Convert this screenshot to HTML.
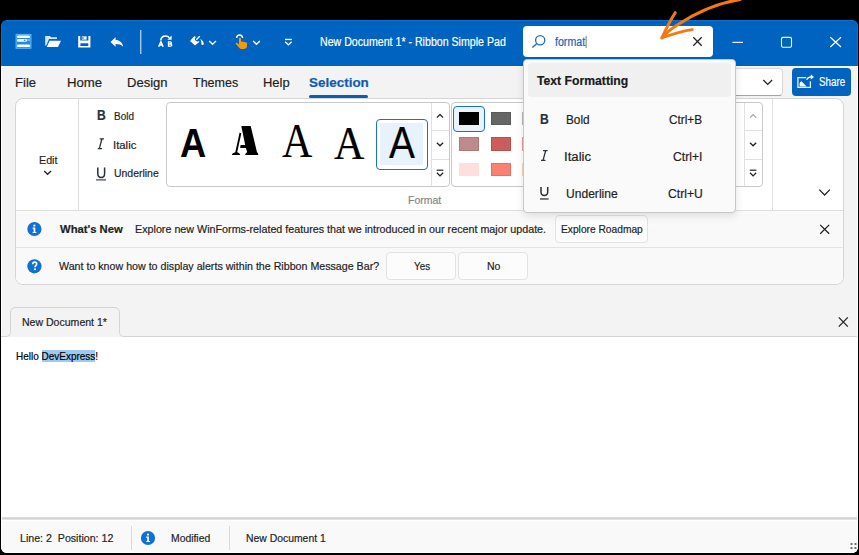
<!DOCTYPE html>
<html><head><meta charset="utf-8">
<style>
html,body{margin:0;padding:0;}
body{width:859px;height:555px;overflow:hidden;background:#000;position:relative;font-family:"Liberation Sans",sans-serif;}
.a{position:absolute;box-sizing:border-box;}
.tx{position:absolute;-webkit-text-stroke:0.2px currentColor;white-space:pre;line-height:1;font-family:"Liberation Sans",sans-serif;transform-origin:0 0;}
svg{position:absolute;overflow:visible;}
</style></head><body>
<!-- window -->
<div class="a" style="left:1px;top:20px;width:857px;height:46px;background:#0063c0;border:1px solid #1270cc;border-bottom:none;border-radius:6px 6px 0 0;"></div>
<div class="a" style="left:1px;top:66px;width:857px;height:487px;background:#f3f3f3;border:1px solid #fdfdfd;border-top:none;border-radius:0 0 6px 6px;"></div>
<!-- search box -->
<div class="a" style="left:523px;top:26px;width:190px;height:31px;background:#fff;border-radius:4px;"></div>
<!-- combobox -->
<div class="a" style="left:700px;top:68px;width:83px;height:28px;background:#fff;border:1px solid #d9d9d9;border-bottom-color:#a3a3a3;border-radius:4px;"></div>
<!-- share -->
<div class="a" style="left:792px;top:68px;width:59px;height:28px;background:#0063c0;border-radius:4px;"></div>
<!-- tab underline -->
<div class="a" style="left:309px;top:95px;width:59px;height:3px;background:#0f5cb5;border-radius:2px;"></div>
<!-- ribbon panel -->
<div class="a" style="left:15px;top:98px;width:829px;height:187px;background:#fff;border:1px solid #d5d5d5;border-radius:8px;overflow:hidden;">
  <div class="a" style="left:62px;top:0;width:1px;height:112px;background:#dedede;"></div>
  <div class="a" style="left:756px;top:0;width:1px;height:112px;background:#dedede;"></div>
  <div class="a" style="left:0;top:111px;width:829px;height:1px;background:#dedede;"></div>
  <div class="a" style="left:0;top:112px;width:829px;height:74px;background:#f9f9f9;"></div>
  <div class="a" style="left:0;top:148px;width:829px;height:1px;background:#e3e3e3;"></div>
</div>
<!-- style gallery -->
<div class="a" style="left:166px;top:102px;width:284px;height:85px;border:1px solid #c9c9c9;border-radius:4px;background:#fff;">
  <div class="a" style="left:264px;top:0;width:1px;height:83px;background:#e0e0e0;"></div>
  <div class="a" style="left:264px;top:27px;width:18px;height:1px;background:#e0e0e0;"></div>
  <div class="a" style="left:264px;top:56px;width:18px;height:1px;background:#e0e0e0;"></div>
</div>
<!-- selected style -->
<div class="a" style="left:376px;top:119px;width:52px;height:51px;border:1.5px solid #1a6fcf;border-radius:4px;background:#fff;">
  <div class="a" style="left:3px;top:3px;width:43px;height:42px;background:#e8f2fc;"></div>
</div>
<!-- color gallery -->
<div class="a" style="left:451px;top:102px;width:312px;height:85px;border:1px solid #c9c9c9;border-radius:4px;background:#fff;">
  <div class="a" style="left:292px;top:0;width:1px;height:83px;background:#e0e0e0;"></div>
  <div class="a" style="left:292px;top:27px;width:18px;height:1px;background:#e0e0e0;"></div>
  <div class="a" style="left:292px;top:56px;width:18px;height:1px;background:#e0e0e0;"></div>
</div>
<div class="a" style="left:453px;top:106px;width:32px;height:26px;border:1.5px solid #1a6fcf;border-radius:4px;background:#eaf3fc;"></div>
<div class="a" style="left:459px;top:112px;width:20px;height:13px;background:#000;"></div>
<div class="a" style="left:491px;top:112px;width:20px;height:13px;background:#666;box-shadow:inset 0 0 0 1px rgba(0,0,0,0.1);"></div>
<div class="a" style="left:459px;top:137px;width:20px;height:14px;background:#c08a8a;box-shadow:inset 0 0 0 1px rgba(0,0,0,0.1);"></div>
<div class="a" style="left:491px;top:137px;width:20px;height:14px;background:#cd5c5c;box-shadow:inset 0 0 0 1px rgba(0,0,0,0.1);"></div>
<div class="a" style="left:459px;top:163px;width:20px;height:13px;background:#ffdfdc;"></div>
<div class="a" style="left:491px;top:163px;width:20px;height:13px;background:#fa8072;box-shadow:inset 0 0 0 1px rgba(0,0,0,0.1);"></div>
<div class="a" style="left:522px;top:112px;width:1px;height:13px;background:#b8b8b8;"></div><div class="a" style="left:522px;top:137px;width:1px;height:14px;background:#dba0a0;"></div><div class="a" style="left:522px;top:163px;width:1px;height:13px;background:#f0d4c0;"></div>
<!-- message bar buttons -->
<div class="a" style="left:555px;top:215px;width:93px;height:28px;background:#fcfcfc;border:1px solid #e2e2e2;border-radius:4px;"></div>
<div class="a" style="left:386px;top:252px;width:70px;height:28px;background:#fcfcfc;border:1px solid #e2e2e2;border-radius:4px;"></div>
<div class="a" style="left:458px;top:252px;width:70px;height:28px;background:#fcfcfc;border:1px solid #e2e2e2;border-radius:4px;"></div>
<!-- doc tab + editor -->
<div class="a" style="left:1px;top:337px;width:857px;height:180px;background:#fff;"></div>
<svg style="left:0;top:0" width="859" height="555" viewBox="0 0 859 555">
  <path d="M10.5 337 V313 Q10.5 307.5 16 307.5 H114 Q119.5 307.5 119.5 313 V337 Z" fill="#f3f3f3"/>
  <path d="M1 336.5 H6.5 Q10.5 336.5 10.5 332.5 V313 Q10.5 307.5 16 307.5 H114 Q119.5 307.5 119.5 313 V332.5 Q119.5 336.5 123.5 336.5 H857" stroke="#d4d4d4" stroke-width="1" fill="none"/>
</svg>
<div class="a" style="left:42px;top:350px;width:53px;height:12px;background:#9ccaf3;"></div>
<!-- status bar -->
<div class="a" style="left:2px;top:517px;width:855px;height:3px;background:linear-gradient(#dcdcdc 0 33%,#d2d2d2 33% 66%,#e4e4e4 66%);"></div><div class="a" style="left:2px;top:520px;width:855px;height:1px;background:#fefefe;z-index:1"></div>
<div class="a" style="left:1px;top:520px;width:857px;height:33px;background:#f9f9f9;border:1px solid #fff;border-top:none;border-radius:0 0 6px 6px;"></div>
<div class="a" style="left:131px;top:526px;width:1px;height:24px;background:#dadada;"></div>
<div class="a" style="left:229px;top:526px;width:1px;height:24px;background:#dadada;"></div>

<svg style="left:0;top:0" width="859" height="555" viewBox="0 0 859 555">
  <!-- app icon -->
  <rect x="15.4" y="33.8" width="16.2" height="15.2" rx="1" fill="#2289e6"/>
  <rect x="16.2" y="34.6" width="14.6" height="13.6" fill="none" stroke="#5fb2f6" stroke-width="1"/>
  <rect x="17" y="35.5" width="13" height="2.6" rx="1.2" fill="#fff"/>
  <rect x="17" y="38.9" width="10" height="2.8" rx="1.2" fill="#fff"/><rect x="27" y="39.5" width="3" height="1" fill="#bfe0fb"/>
  <circle cx="24.6" cy="40.3" r="0.9" fill="#2f86dc"/>
  <rect x="17" y="44.4" width="13" height="2.7" rx="1.2" fill="#fff"/>
  <!-- folder -->
  <path d="M45.2 35.9 H50 L51 37.3 H57 V39 H49 L46.3 45.5 H45.2 Z" fill="#d3e6fa"/>
  <path d="M49.6 40.8 H61 L58 46.9 H46.8 Z" fill="#fff"/>
  <!-- save -->
  <path d="M78.2 35.9 H80.2 V40.6 H88.4 V35.9 H90.4 V47.6 H78.2 Z M80.4 43.2 V46 H88.3 V43.2 Z" fill="#fff" fill-rule="evenodd"/>
  <rect x="81.8" y="36.4" width="4.8" height="3.2" fill="#fff"/>
  <circle cx="82.9" cy="38" r="0.9" fill="#3d86d6"/>
  <!-- undo -->
  <path d="M110.5 42 L115.6 37.2 V40.1 C119.5 40.1 122.3 42.3 123.2 46.8 C121.4 44.6 119 43.9 115.6 43.9 V46.8 Z" fill="#fff"/>
  <!-- separator -->
  <rect x="140" y="30" width="1.4" height="24" fill="#a9c6ea"/>
  <!-- AB -->
  <path d="M160.8 40.2 C161.2 37.2 163.5 36 165.5 36 C167.3 36 168.6 36.8 169.3 37.8" stroke="#fff" stroke-width="1.6" fill="none"/>
  <path d="M171.6 35.4 V39.8 H167.3 Z" fill="#fff"/>
  <path d="M158.7 46.7 L160.9 41.6 L163.1 46.7 M159.6 45 H162.2" stroke="#fff" stroke-width="1.5" fill="none"/>
  <path d="M168.5 41.9 V46.1 H170.6 Q171.8 46.1 171.8 45.1 Q171.8 44 170.4 44 H168.5 M168.5 44 H170.2 Q171.4 44 171.4 42.9 Q171.4 41.9 170.2 41.9 H167.9" stroke="#fff" stroke-width="1.3" fill="none"/>
  <!-- paint bucket -->
  <path d="M190.2 40.8 L194 36.6 Q194.6 36 195.2 36.6 L195.7 37.1 Q193.9 38.9 195.4 40.6 Q197.2 42.1 199 40.9 L199.2 41.2 Q199.5 41.8 199 42.3 L195.5 44.9 Q194.8 45.4 194.2 44.8 L190.6 41.6 Q190 41.2 190.2 40.8 Z" fill="#fff"/>
  <path d="M196.3 39.7 L199.7 36.3" stroke="#fff" stroke-width="1.5"/>
  <path d="M200.3 38.8 Q203.7 41 203.8 43.4 Q203.8 45.1 202.6 45.1 Q201.3 45.1 201.4 43.4 Q201.5 41.5 200.3 38.8 Z" fill="#fff"/>
  <!-- chevrons -->
  <path d="M209.2 41 L212.6 44.2 L216 41" stroke="#fff" stroke-width="1.4" fill="none"/>
  <path d="M253.1 41 L256.5 44.3 L259.9 41" stroke="#fff" stroke-width="1.4" fill="none"/>
  <!-- touch hand -->
  <path d="M236.6 38 C236.8 36 238.2 35 239.6 35 C241 35 242.4 36 242.6 38" stroke="#fff" stroke-width="1.5" fill="none"/>
  <path d="M239 38.6 C239 37.6 241 37.6 241 38.6 V42 C241.4 41.4 242.8 41.4 243 42.1 C243.5 41.6 244.8 41.6 245 42.5 C245.4 42 246.9 42.2 247 43.2 V46 C247 47.8 245.6 48.9 243.8 48.9 H241.6 C240.4 48.9 239.6 48.3 238.9 47.4 L235.9 44 C235.4 43.3 236.3 42.3 237.2 42.9 L239 44.4 Z" fill="#f39a12"/>
  <!-- customize -->
  <rect x="285" y="38.8" width="6.8" height="1.3" fill="#fff"/>
  <path d="M285.2 41.8 L288.4 44.9 L291.6 41.8" stroke="#fff" stroke-width="1.4" fill="none"/>
  <!-- window controls -->
  <rect x="732.4" y="41.8" width="10.6" height="1.1" fill="#fff"/>
  <rect x="781.5" y="37.4" width="10" height="9.8" rx="1.5" stroke="#fff" stroke-width="1.1" fill="none"/>
  <path d="M830.3 37.2 L841 47 M841 37.2 L830.3 47" stroke="#fff" stroke-width="1.2"/>
  <!-- search icon -->
  <circle cx="540.2" cy="40.2" r="4.6" stroke="#1a6cc4" stroke-width="1.3" fill="none"/>
  <path d="M536.9 43.5 L532.4 47.5" stroke="#1a6cc4" stroke-width="1.4"/>
  <rect x="585.6" y="36" width="1" height="12" fill="#7a7a7a"/>
  <path d="M693.3 37.2 L701.7 45.7 M701.7 37.2 L693.3 45.7" stroke="#222" stroke-width="1.3"/>
</svg>
<svg style="left:0;top:0" width="859" height="555" viewBox="0 0 859 555">
  <!-- combobox chevron -->
  <path d="M763.3 80 L767.7 84.4 L772.1 80" stroke="#222" stroke-width="1.3" fill="none"/>
  <!-- share icon -->
  <path d="M806.2 77.7 H797.9 V87.3 H810.4 V81.2" stroke="#e6f0fb" stroke-width="1.3" fill="none"/>
  <path d="M799.6 86.4 V83.4 C800.2 82.2 800.8 81.3 801.4 81.3 L806.6 86.4 Z" fill="#fff"/>
  <path d="M806.6 79.6 C807.6 77.8 809 76.9 811 76.8" stroke="#fff" stroke-width="1.5" fill="none"/>
  <path d="M810.8 74.2 L814 77 L810.8 79.6 Z" fill="#fff"/>
  <!-- edit chevron -->
  <path d="M44.2 171 L47.6 174.3 L51 171" stroke="#222" stroke-width="1.3" fill="none"/>
  <!-- I icon -->
  <path d="M99.7 138.9 H104 M101.9 139 L99.3 148.6 M97.8 148.7 H102" stroke="#27313b" stroke-width="1.3" fill="none"/>
  <!-- U icon -->
  <path d="M97.8 167.4 V173.6 C97.8 176.4 99.4 177.6 101.3 177.6 C103.2 177.6 104.6 176.4 104.6 173.6 V167.4" stroke="#27313b" stroke-width="1.5" fill="none"/>
  <rect x="96.1" y="178.9" width="9.9" height="1.8" fill="#7d7d7d"/>
  <!-- style gallery scroll chevrons -->
  <path d="M436.9 117.6 L440 114.5 L443.1 117.6" stroke="#222" stroke-width="1.3" fill="none"/>
  <path d="M436.9 142.7 L440 145.8 L443.1 142.7" stroke="#222" stroke-width="1.3" fill="none"/>
  <rect x="436.7" y="169.6" width="6.6" height="1.2" fill="#222"/>
  <path d="M436.9 172.8 L440 175.9 L443.1 172.8" stroke="#222" stroke-width="1.3" fill="none"/>
  <!-- color gallery scroll chevrons -->
  <path d="M750 117.6 L753.1 114.5 L756.2 117.6" stroke="#a8a8a8" stroke-width="1.2" fill="none"/>
  <path d="M750 142.7 L753.1 145.8 L756.2 142.7" stroke="#222" stroke-width="1.3" fill="none"/>
  <rect x="749.8" y="169.6" width="6.6" height="1.2" fill="#222"/>
  <path d="M750 172.8 L753.1 175.9 L756.2 172.8" stroke="#222" stroke-width="1.3" fill="none"/>
  <!-- collapse chevron -->
  <path d="M819.3 189.6 L824.6 195 L829.9 189.6" stroke="#222" stroke-width="1.3" fill="none"/>
  <!-- info icons -->
  <circle cx="34.4" cy="229" r="7.1" fill="#1170d4"/>
  <circle cx="34.4" cy="225.6" r="1.1" fill="#fff"/>
  <path d="M32.6 227.6 H35.3 V232 H36.4 V233.1 H32.6 V232 H33.6 V228.7 H32.6 Z" fill="#fff"/>
  <circle cx="34.4" cy="266.3" r="7.1" fill="#1170d4"/>
  <path d="M32.7 264.3 C32.7 262.9 33.6 262.1 34.7 262.1 C35.9 262.1 36.7 262.9 36.7 263.9 C36.7 265.3 35 265.5 35 267.2" stroke="#fff" stroke-width="1.6" fill="none"/>
  <circle cx="35" cy="269.3" r="1" fill="#fff"/>
  <circle cx="148" cy="538" r="7.1" fill="#1170d4"/>
  <circle cx="148" cy="534.6" r="1.1" fill="#fff"/>
  <path d="M146.2 536.6 H148.9 V541 H150 V542.1 H146.2 V541 H147.2 V537.7 H146.2 Z" fill="#fff"/>
  <!-- close Xs -->
  <path d="M820.2 224.9 L829.2 233.7 M829.2 224.9 L820.2 233.7" stroke="#222" stroke-width="1.3"/>
  <path d="M838.8 317.4 L847.8 326.6 M847.8 317.4 L838.8 326.6" stroke="#222" stroke-width="1.3"/>
  <!-- size grip -->
  <g fill="#6e6e6e"><rect x="850.5" y="543" width="2" height="2" rx="0.5"/><rect x="854.5" y="543" width="2" height="2" rx="0.5"/><rect x="850.5" y="547" width="2" height="2" rx="0.5"/><rect x="854.5" y="547" width="2" height="2" rx="0.5"/></g>
  <!-- gallery A #2 -->
  <path d="M241.3 126 L250.7 126 L257 152.2 C257.8 152.7 258.3 153.6 258.3 155.1 L245.2 155.1 C245.3 153.7 245.9 152.8 247.2 152.2 L245.9 147.9 L240.1 147.9 L240.6 144.9 L245.2 144.9 Z" fill="#000"/>
  <path d="M239.6 132.6 L241.3 133.6 L237.2 152.2 C238.8 152.6 239.9 153.6 240.1 155.1 L231.8 155.1 C232.2 153.6 233.4 152.6 235.3 152.2 Z" fill="#000"/>
</svg>

<!-- popup -->
<div class="a" style="left:523px;top:59px;width:213px;height:154px;background:#fafafa;border:1px solid #c6c6c6;border-radius:4px;box-shadow:0 3px 8px rgba(0,0,0,0.11);">
  <div class="a" style="left:4px;top:3px;width:203px;height:34px;background:#f0f0f0;border-radius:4px;"></div>
</div>
<svg style="left:0;top:0" width="859" height="555" viewBox="0 0 859 555">
  <path d="M543.1 150.7 H547.6 M545.6 150.8 L543.1 160.2 M541 160.3 H545.5" stroke="#27313b" stroke-width="1.3" fill="none"/>
  <path d="M541 187.1 V192 C541 194.6 542.6 195.4 544.3 195.4 C546 195.4 547.7 194.6 547.7 192 V187.1" stroke="#27313b" stroke-width="1.5" fill="none"/>
  <rect x="540" y="198.2" width="8.6" height="1.5" fill="#505050"/>
</svg>

<div class="tx" style="left:320.15px;top:35.92px;font-size:12.5px;font-family:&quot;Liberation Sans&quot;;font-style:normal;font-weight:400;color:#ffffff;transform:scaleX(0.8490);">New Document 1* - Ribbon Simple Pad</div>
<div class="tx" style="left:555.00px;top:35.64px;font-size:12px;font-family:&quot;Liberation Sans&quot;;font-style:normal;font-weight:400;color:#1464c0;transform:scaleX(0.8854);">format</div>
<div class="tx" style="left:15.03px;top:75.77px;font-size:13.5px;font-family:&quot;Liberation Sans&quot;;font-style:normal;font-weight:400;color:#1f1f1f;transform:scaleX(0.9681);">File</div>
<div class="tx" style="left:67.02px;top:75.77px;font-size:13.5px;font-family:&quot;Liberation Sans&quot;;font-style:normal;font-weight:400;color:#1f1f1f;transform:scaleX(0.9767);">Home</div>
<div class="tx" style="left:126.63px;top:75.77px;font-size:13.5px;font-family:&quot;Liberation Sans&quot;;font-style:normal;font-weight:400;color:#1f1f1f;transform:scaleX(0.9651);">Design</div>
<div class="tx" style="left:192.80px;top:75.77px;font-size:13.5px;font-family:&quot;Liberation Sans&quot;;font-style:normal;font-weight:400;color:#1f1f1f;transform:scaleX(0.9262);">Themes</div>
<div class="tx" style="left:262.84px;top:75.77px;font-size:13.5px;font-family:&quot;Liberation Sans&quot;;font-style:normal;font-weight:400;color:#1f1f1f;transform:scaleX(0.9598);">Help</div>
<div class="tx" style="left:308.50px;top:75.77px;font-size:13.5px;font-family:&quot;Liberation Sans&quot;;font-style:normal;font-weight:700;color:#0f5cb5;transform:scaleX(0.9971);">Selection</div>
<div class="tx" style="left:818.80px;top:75.74px;font-size:12px;font-family:&quot;Liberation Sans&quot;;font-style:normal;font-weight:400;color:#ffffff;transform:scaleX(0.8161);">Share</div>
<div class="tx" style="left:38.60px;top:155.49px;font-size:11px;font-family:&quot;Liberation Sans&quot;;font-style:normal;font-weight:400;color:#1f1f1f;transform:scaleX(0.9736);">Edit</div>
<div class="tx" style="left:114.20px;top:111.39px;font-size:11px;font-family:&quot;Liberation Sans&quot;;font-style:normal;font-weight:400;color:#1f1f1f;transform:scaleX(0.9042);">Bold</div>
<div class="tx" style="left:113.17px;top:140.49px;font-size:11px;font-family:&quot;Liberation Sans&quot;;font-style:normal;font-weight:400;color:#1f1f1f;transform:scaleX(1.0308);">Italic</div>
<div class="tx" style="left:114.20px;top:168.09px;font-size:11px;font-family:&quot;Liberation Sans&quot;;font-style:normal;font-weight:400;color:#1f1f1f;transform:scaleX(0.9496);">Underline</div>
<div class="tx" style="left:408.00px;top:195.29px;font-size:11px;font-family:&quot;Liberation Sans&quot;;font-style:normal;font-weight:400;color:#858585;transform:scaleX(0.9517);">Format</div>
<div class="tx" style="left:59.80px;top:224.26px;font-size:11.5px;font-family:&quot;Liberation Sans&quot;;font-style:normal;font-weight:700;color:#1f1f1f;transform:scaleX(0.9793);">What's New</div>
<div class="tx" style="left:135.20px;top:223.69px;font-size:11px;font-family:&quot;Liberation Sans&quot;;font-style:normal;font-weight:400;color:#1f1f1f;transform:scaleX(0.9758);">Explore new WinForms-related features that we introduced in our recent major update.</div>
<div class="tx" style="left:561.00px;top:224.29px;font-size:11px;font-family:&quot;Liberation Sans&quot;;font-style:normal;font-weight:400;color:#1f1f1f;transform:scaleX(0.9291);">Explore Roadmap</div>
<div class="tx" style="left:58.70px;top:260.59px;font-size:11px;font-family:&quot;Liberation Sans&quot;;font-style:normal;font-weight:400;color:#1f1f1f;transform:scaleX(0.9690);">Want to know how to display alerts within the Ribbon Message Bar?</div>
<div class="tx" style="left:413.60px;top:261.39px;font-size:11px;font-family:&quot;Liberation Sans&quot;;font-style:normal;font-weight:400;color:#1f1f1f;transform:scaleX(0.8946);">Yes</div>
<div class="tx" style="left:486.70px;top:261.39px;font-size:11px;font-family:&quot;Liberation Sans&quot;;font-style:normal;font-weight:400;color:#1f1f1f;transform:scaleX(0.9538);">No</div>
<div class="tx" style="left:22.00px;top:316.69px;font-size:11px;font-family:&quot;Liberation Sans&quot;;font-style:normal;font-weight:400;color:#1f1f1f;transform:scaleX(0.9578);">New Document 1*</div>
<div class="tx" style="left:15.80px;top:350.99px;font-size:11px;font-family:&quot;Liberation Sans&quot;;font-style:normal;font-weight:400;color:#000000;transform:scaleX(0.9069);">Hello DevExpress!</div>
<div class="tx" style="left:19.50px;top:532.59px;font-size:11px;font-family:&quot;Liberation Sans&quot;;font-style:normal;font-weight:400;color:#1f1f1f;transform:scaleX(0.9658);">Line: 2  Position: 12</div>
<div class="tx" style="left:171.40px;top:532.59px;font-size:11px;font-family:&quot;Liberation Sans&quot;;font-style:normal;font-weight:400;color:#1f1f1f;transform:scaleX(0.9431);">Modified</div>
<div class="tx" style="left:246.00px;top:532.59px;font-size:11px;font-family:&quot;Liberation Sans&quot;;font-style:normal;font-weight:400;color:#1f1f1f;transform:scaleX(0.9448);">New Document 1</div>
<div class="tx" style="left:536.70px;top:74.29px;font-size:13px;font-family:&quot;Liberation Sans&quot;;font-style:normal;font-weight:700;color:#1a1a1a;transform:scaleX(0.9382);">Text Formatting</div>
<div class="tx" style="left:565.50px;top:113.84px;font-size:12px;font-family:&quot;Liberation Sans&quot;;font-style:normal;font-weight:400;color:#1f1f1f;transform:scaleX(0.9810);">Bold</div>
<div class="tx" style="left:564.40px;top:150.84px;font-size:12px;font-family:&quot;Liberation Sans&quot;;font-style:normal;font-weight:400;color:#1f1f1f;transform:scaleX(1.0983);">Italic</div>
<div class="tx" style="left:565.50px;top:188.04px;font-size:12px;font-family:&quot;Liberation Sans&quot;;font-style:normal;font-weight:400;color:#1f1f1f;transform:scaleX(1.0060);">Underline</div>
<div class="tx" style="left:668.60px;top:113.84px;font-size:12px;font-family:&quot;Liberation Sans&quot;;font-style:normal;font-weight:400;color:#1f1f1f;transform:scaleX(0.9801);">Ctrl+B</div>
<div class="tx" style="left:672.50px;top:150.84px;font-size:12px;font-family:&quot;Liberation Sans&quot;;font-style:normal;font-weight:400;color:#1f1f1f;transform:scaleX(1.0150);">Ctrl+I</div>
<div class="tx" style="left:667.50px;top:188.04px;font-size:12px;font-family:&quot;Liberation Sans&quot;;font-style:normal;font-weight:400;color:#1f1f1f;transform:scaleX(1.0128);">Ctrl+U</div>
<div class="tx" style="left:180.39px;top:123.05px;font-size:40.57px;font-family:&quot;Liberation Sans&quot;;font-style:normal;font-weight:700;color:#000;transform:scaleX(0.8946);-webkit-text-stroke:0;">A</div>
<div class="tx" style="left:281.50px;top:117.79px;font-size:47.54px;font-family:&quot;Liberation Serif&quot;;font-style:normal;font-weight:400;color:#000;transform:scaleX(0.8849);-webkit-text-stroke:0;">A</div>
<div class="tx" style="left:334.20px;top:121.41px;font-size:45.85px;font-family:&quot;Liberation Serif&quot;;font-style:normal;font-weight:400;color:#000;transform:scaleX(0.9176);">A</div>
<div class="tx" style="left:388.80px;top:121.22px;font-size:44.86px;font-family:&quot;Liberation Sans&quot;;font-style:normal;font-weight:400;color:#000;transform:scaleX(0.8653);">A</div>
<div class="tx" style="left:96.60px;top:108.08px;font-size:14.67px;font-family:&quot;Liberation Sans&quot;;font-style:normal;font-weight:700;color:#27313b;transform:scaleX(0.8273);">B</div>
<div class="tx" style="left:539.90px;top:111.58px;font-size:14.67px;font-family:&quot;Liberation Sans&quot;;font-style:normal;font-weight:700;color:#27313b;transform:scaleX(0.8273);">B</div>
<svg style="left:0;top:0" width="859" height="555" viewBox="0 0 859 555">
  <path d="M740 -0.5 C716 3.5 694 14 678 24.5 C670 29.5 665 34 662 37.8" stroke="#f7780f" stroke-width="3.1" fill="none" stroke-linecap="round"/>
  <path d="M675.3 12.6 C670.5 20 665.5 30 662 37.8" stroke="#f7780f" stroke-width="2.9" fill="none" stroke-linecap="round"/>
  <path d="M692.4 29.6 C682 31 670 35 662 37.8" stroke="#f7780f" stroke-width="2.6" fill="none" stroke-linecap="round"/>
</svg>

</body></html>
